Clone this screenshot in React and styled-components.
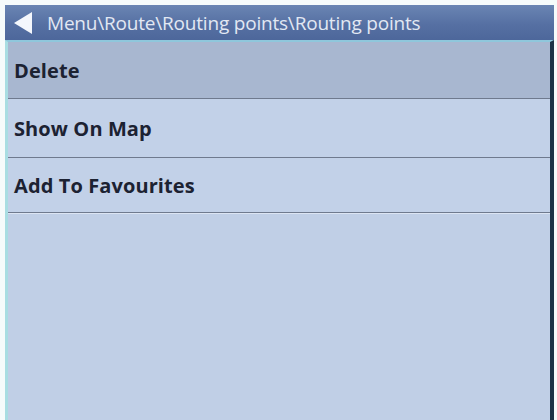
import React from "react";
import styled, { createGlobalStyle } from "styled-components";

const Global = createGlobalStyle`
  html, body { margin: 0; padding: 0; background: #ffffff; }
  body { font-family: "Open Sans", "DejaVu Sans", sans-serif; }
`;

const Screen = styled.div`
  width: 557px;
  height: 420px;
  box-sizing: border-box;
  padding: 5px 3px 0 5px;
  display: flex;
  flex-direction: column;
  background: #f6fbfb;
`;

const Header = styled.div`
  height: 35px;
  flex: none;
  display: flex;
  align-items: center;
  gap: 14px;
  padding-left: 8px;
  background: linear-gradient(#6a85b3, #5670a3 55%, #4d679b);
  color: #e2e8f3;
  font-size: 19px;
  letter-spacing: -0.2px;
  white-space: nowrap;
`;

const Body = styled.div`
  flex: 1;
  display: flex;
  flex-direction: column;
  background: #c0cfe6;
  border-top: 2px solid #8fc7dc;
  border-left: 3px solid #a9dde2;
  border-right: 4px solid #1d3347;
`;

const Row = styled.div`
  height: ${(p) => p.$h}px;
  flex: none;
  display: flex;
  align-items: center;
  padding-left: 6px;
  box-sizing: border-box;
  background: ${(p) => (p.$active ? "#a8b7d0" : "#c2d1e8")};
  border-bottom: 1px solid #6f7a8e;
  box-shadow: 0 1px 0 #dce5f3;
  color: #1c2232;
  font-size: 20px;
  font-weight: 700;
  letter-spacing: 0.1px;
`;

const Rest = styled.div`
  flex: 1;
`;

const BackArrow = () => (
  <svg width="20" height="22" viewBox="0 0 20 22">
    <polygon points="19,0 19,22 1,11" fill="#f4f7fc" />
  </svg>
);

export default function App() {
  return (
    <>
      <Global />
      <Screen>
        <Header>
          <BackArrow />
          <span>Menu\Route\Routing points\Routing points</span>
        </Header>
        <Body>
          <Row $active $h={57}>Delete</Row>
          <Row $h={59}>Show On Map</Row>
          <Row $h={55}>Add To Favourites</Row>
          <Rest />
        </Body>
      </Screen>
    </>
  );
}
